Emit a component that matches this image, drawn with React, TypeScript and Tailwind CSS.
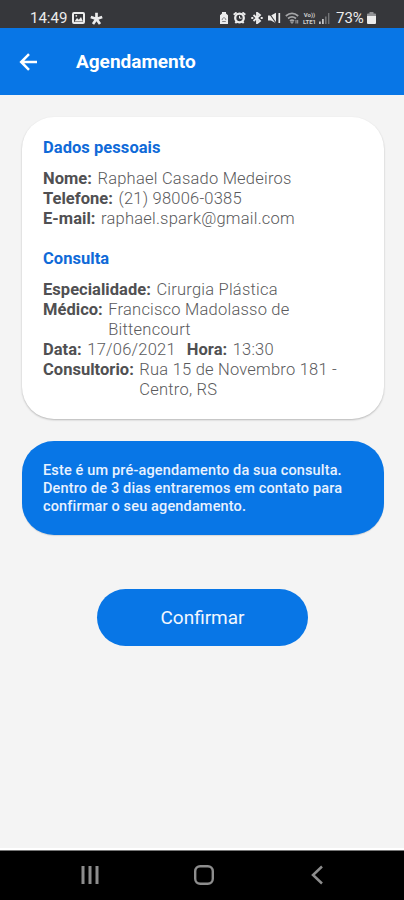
import type { ReactNode } from "react";

function Field({ label, children }: { label: string; children: ReactNode }) {
  return (
    <div className="flex gap-[5.5px] whitespace-nowrap">
      <span className="font-bold tracking-[0.03px] text-[#505052]">{label}</span>
      <span className="font-light tracking-[0.22px]">{children}</span>
    </div>
  );
}

function StatusBar() {
  return (
    <div className="flex h-[28px] shrink-0 items-center bg-[#36373b] pt-2 text-[15px] leading-none text-[#ececec]">
      <span className="ml-[30px] w-[38px] whitespace-nowrap">14:49</span>
      <svg className="ml-[4px] h-3 w-[13px]" viewBox="0 0 13 12" fill="none">
        <rect x="1" y="1" width="11" height="10" rx="1" stroke="currentColor" strokeWidth="2" />
        <path d="M2.5 9.5 5 6l1.8 1.8L9 5l2 4.5z" fill="currentColor" />
        <circle cx="4.3" cy="3.8" r=".9" fill="currentColor" />
      </svg>
      <svg className="ml-[5px] h-[13px] w-[13px]" viewBox="0 0 13 13" stroke="currentColor" strokeWidth="2.7">
        <path d="M6.5 7V.7M6.5 7 .8 5M6.5 7l5.7-2M6.5 7 3 12M6.5 7 10 12" />
      </svg>

      <svg className="ml-[116px] h-3 w-[10px]" viewBox="0 0 10 12">
        <path d="M3 0h4v1.5l2 1.8V12H1V3.3l2-1.8z" fill="currentColor" />
        <path d="M3.2 9.5h3.6M3.2 8c0-3 3.6-3 3.6 0" stroke="#85868a" fill="none" />
      </svg>
      <svg className="ml-[4px] h-3 w-[13px]" viewBox="0 0 13 12" fill="none" stroke="currentColor">
        <circle cx="6.5" cy="6" r="4.3" strokeWidth="2.3" />
        <path d="M.7 2.8 3.6.5M12.3 2.8 9.4.5M2.3 11l1.5-1.5M10.7 11 9.2 9.5" strokeWidth="2" />
        <path d="M6.5 3.8v2.4h2" />
      </svg>
      <svg className="ml-[5px] h-3 w-[12px]" viewBox="0 0 12 12" fill="none" stroke="currentColor" strokeWidth="1.8">
        <path d="m2.5 3 6.5 6-3 2.3V.7L9 3 2.5 9" />
        <path d="M.3 6h2M9.7 6h2" strokeWidth="2" />
      </svg>
      <svg className="ml-[5px] h-3 w-[13px]" viewBox="0 0 13 12">
        <path d="M0 3.5h3L8 .8v10.4L3 8.5H0z" fill="currentColor" />
        <path d="m1 1 7 10" stroke="#36373b" strokeWidth="1.1" />
        <path d="M11.3 1v10" stroke="currentColor" strokeWidth="1.7" />
      </svg>
      <svg className="ml-[4px] h-3 w-[14px]" viewBox="0 0 14 12" fill="none" stroke="#a5a6a8" strokeWidth="1.7">
        <path d="M.8 4Q7-1.3 13.2 4M3 6.5q4-3.3 8 0M5 9q2-1.7 4 0" />
        <path d="m5.8 10 1.2 1.5L8.2 10zM11 8v3.5M12.7 8v3.5" strokeWidth="1" />
      </svg>
      <div className="ml-[3px] flex w-[15px] flex-col items-center text-[6px] leading-[7px] font-bold whitespace-nowrap text-[#cfcfcf]">
        <span>Vo))</span>
        <span>LTE1</span>
      </div>
      <svg className="ml-[2px] h-[11px] w-[11px]" viewBox="0 0 11 11">
        <path d="M0 11V8.5h1.8V11zM3 11V6h1.8v5z" fill="#c4c4c6" />
        <path d="M6 11V3.5h1.6V11zM9 11V0h1.4v11z" fill="#727376" />
      </svg>
      <span className="ml-[6px] w-[30px] whitespace-nowrap">73%</span>
      <svg className="ml-[1px] h-3 w-[9px]" viewBox="0 0 9 12">
        <path d="M2.5 0h4v1.5H8q1 0 1 1V4H0V2.5q0-1 1-1h1.5z" fill="#929396" />
        <path d="M0 4h9v7q0 1-1 1H1q-1 0-1-1z" fill="currentColor" />
      </svg>
    </div>
  );
}

function NavigationBar() {
  return (
    <div className="flex h-[50px] shrink-0 items-center justify-between border-t border-[#777] bg-black pr-[81px] pb-[2px] pl-[81px] text-[#8d8d8d]">
      <svg className="h-5 w-[18px]" viewBox="0 0 18 20" stroke="currentColor" strokeWidth="3">
        <path d="M2 1v18M9 1v18M16 1v18" />
      </svg>
      <svg className="-ml-[3px] h-5 w-5" viewBox="0 0 20 20" fill="none" stroke="currentColor" strokeWidth="2.4">
        <rect x="1.2" y="1.2" width="17.6" height="17.6" rx="5" />
      </svg>
      <svg className="h-5 w-[12px]" viewBox="0 0 12 20" fill="none" stroke="currentColor" strokeWidth="2.5">
        <path d="M11 1.5 2 10l9 8.5" />
      </svg>
    </div>
  );
}

export default function App() {
  return (
    <div className="flex h-[900px] w-[404px] flex-col overflow-hidden bg-[#f4f4f4] font-['Roboto',sans-serif]">
      <StatusBar />
      <header className="flex h-[67px] shrink-0 items-center bg-[#0876e6] text-white">
        <button aria-label="Voltar" className="ml-[19px]">
          <svg className="h-[18px] w-[19px]" viewBox="0 0 19 18" fill="none" stroke="currentColor" strokeWidth="2.5">
            <path d="M18 9H2.5M10 1.2 2.2 9l7.8 7.8" />
          </svg>
        </button>
        <h1 className="ml-[38px] pt-[2px] text-[19px] font-bold whitespace-nowrap">Agendamento</h1>
      </header>

      <main className="flex flex-1 flex-col pt-[22px] pr-[20px] pl-[22px]">
        <section className="h-[302px] rounded-[32px] bg-white px-[21px] pt-[21px] text-[16.5px] leading-5 text-[#5a5a5c] shadow-[0_1px_2px_rgba(0,0,0,0.25)]">
          <h2 className="mb-[11px] font-bold tracking-[0.05px] text-[#0f6ad8]">Dados pessoais</h2>
          <Field label="Nome:">Raphael Casado Medeiros</Field>
          <Field label="Telefone:">(21) 98006-0385</Field>
          <Field label="E-mail:">raphael.spark@gmail.com</Field>

          <h2 className="mt-[20px] mb-[11px] font-bold tracking-[0.05px] text-[#0f6ad8]">Consulta</h2>
          <Field label="Especialidade:">Cirurgia Plástica</Field>
          <Field label="Médico:">
            Francisco Madolasso de
            <br />
            Bittencourt
          </Field>
          <div className="flex gap-[11px]">
            <Field label="Data:">17/06/2021</Field>
            <Field label="Hora:">13:30</Field>
          </div>
          <Field label="Consultorio:">
            Rua 15 de Novembro 181 -
            <br />
            Centro, RS
          </Field>
        </section>

        <p className="mt-[22px] h-[94px] rounded-[32px] bg-[#0876e6] px-[21px] pt-[21px] text-[14.5px] leading-[18px] font-medium tracking-[0.15px] whitespace-nowrap text-[#e8f2ff] shadow-[0_1px_1px_rgba(0,0,0,0.12)]">
          Este é um pré-agendamento da sua consulta.
          <br />
          Dentro de 3 dias entraremos em contato para
          <br />
          confirmar o seu agendamento.
        </p>

        <button className="mt-[54px] mr-[1px] h-[57px] w-[211px] self-center rounded-[29px] bg-[#0876e6] pt-[2px] text-[19px] text-[#f1f7ff]">
          Confirmar
        </button>
      </main>

      <div className="h-[2px] shrink-0 bg-white" />
      <NavigationBar />
    </div>
  );
}
